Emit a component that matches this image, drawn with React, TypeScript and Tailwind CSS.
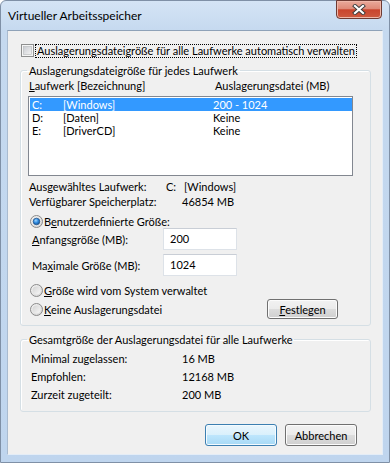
import React from 'react'

const drives = [
  { letter: 'C:', name: '[Windows]', size: '200 - 1024', selected: true },
  { letter: 'D:', name: '[Daten]', size: 'Keine', selected: false },
  { letter: 'E:', name: '[DriverCD]', size: 'Keine', selected: false },
]

const Radio: React.FC<{ checked?: boolean }> = ({ checked }) => (
  <svg width="13" height="13" viewBox="0 0 13 13" className="shrink-0">
    <defs>
      <linearGradient id="radioRing" x1="0" y1="0" x2="1" y2="1">
        <stop offset="0" stopColor="#f6f6f6" />
        <stop offset="1" stopColor="#d2d2d2" />
      </linearGradient>
      <linearGradient id="radioInner" x1="0" y1="0" x2="1" y2="1">
        <stop offset="0" stopColor="#d3d3d3" />
        <stop offset="1" stopColor="#f7f7f7" />
      </linearGradient>
      <radialGradient id="radioDot" cx="0.4" cy="0.35" r="0.7">
        <stop offset="0" stopColor="#9fd6ff" />
        <stop offset="0.5" stopColor="#2e8ae0" />
        <stop offset="1" stopColor="#174f8c" />
      </radialGradient>
    </defs>
    <circle cx="6.5" cy="6.5" r="6" fill="url(#radioRing)" stroke="#8a8a8a" strokeWidth="1" />
    <circle cx="6.5" cy="6.5" r="4" fill="url(#radioInner)" />
    {checked && <circle cx="6.5" cy="6.5" r="3.3" fill="url(#radioDot)" stroke="#1c4f86" strokeWidth="0.7" />}
  </svg>
)

const Checkbox = () => (
  <svg width="13" height="13" viewBox="0 0 13 13" className="shrink-0">
    <defs>
      <linearGradient id="cbInner" x1="0" y1="0" x2="1" y2="1">
        <stop offset="0" stopColor="#c9ccd1" />
        <stop offset="1" stopColor="#f4f4f4" />
      </linearGradient>
    </defs>
    <rect x="0.5" y="0.5" width="12" height="12" fill="#f5f5f5" stroke="#8e8f8f" />
    <rect x="2.5" y="2.5" width="8" height="8" fill="url(#cbInner)" stroke="#b5b7ba" strokeWidth="0.6" />
  </svg>
)

const WinButton: React.FC<{ children: React.ReactNode; primary?: boolean; className?: string }> = ({ children, primary, className }) => (
  <div
    className={
      'flex items-center justify-center rounded-[3px] border text-black ' +
      (primary
        ? 'border-[#3c7fb1] bg-[linear-gradient(#eaf6fd_0%,#d9f0fc_50%,#bee6fd_50%,#a7d9f5_100%)] shadow-[inset_0_0_0_1px_#f4fbff] '
        : 'border-[#707070] bg-[linear-gradient(#f2f2f2_0%,#ebebeb_50%,#dddddd_50%,#cfcfcf_100%)] shadow-[inset_0_0_0_1px_#fcfcfc] ') +
      (className ?? '')
    }
  >
    {children}
  </div>
)

export default function App() {
  return (
    <div className="w-[390px] font-['Lato',sans-serif] text-[11px] leading-[15px] text-black">
      <div className="rounded-t-[6px] border border-[#7f90a6] bg-[linear-gradient(#d4e4f5_0px,#c5d9ef_30px,#bfd5ee_100%)] px-[6px] pb-[7px]">
        {/* title bar */}
        <div className="flex h-[29px] items-start justify-between">
          <span className="pl-[1px] pt-[7px] text-[12px]">Virtueller Arbeitsspeicher</span>
          <div className="mr-[1px] mt-[-1px] flex h-[19px] w-[46px] items-center justify-center rounded-b-[4px] border border-[#6e3a32] bg-[linear-gradient(#eaaa9b_0%,#df8a78_45%,#c9452d_52%,#cd5a40_100%)] shadow-[inset_0_0_0_1px_#efb7a8]">
            <svg width="14" height="11" viewBox="0 0 14 11">
              <path d="M3 2 L11 9 M11 2 L3 9" stroke="#3b3b3b" strokeWidth="4" strokeLinecap="square" />
              <path d="M3 2 L11 9 M11 2 L3 9" stroke="#ffffff" strokeWidth="2.2" strokeLinecap="square" />
            </svg>
          </div>
        </div>

        {/* client area */}
        <div className="border border-t-[#8fa2b8] border-l-[#a9bbd0] border-r-[#e4edf7] border-b-[#e4edf7] bg-[#f0f0f0] px-[12px] pb-[8px] pt-[12px]">
          <div className="flex h-[15px] items-center">
            <div className="ml-[1px]">
              <Checkbox />
            </div>
            <span className="ml-[1px] whitespace-nowrap border border-dotted border-black px-[1px] leading-[12px]">
              Auslagerungsdateigröße für alle Laufwerke automatisch verwalten
            </span>
          </div>

          <fieldset className="mt-[5px] w-[351px] rounded-[3px] border border-[#d5dfe5] pb-[6px] pl-[7px] shadow-[inset_1px_1px_0_#ffffff]">
            <legend className="ml-[-1px] px-[2px]">Auslagerungsdateigröße für jedes Laufwerk</legend>
            <div className="flex">
              <span className="ml-[1px] w-[186px]">
                <u>L</u>aufwerk [Bezeichnung]
              </span>
              <span>Auslagerungsdatei (MB)</span>
            </div>
            <div className="mt-[3px] h-[80px] w-[325px] border border-[#828790] bg-white pl-[1px] pt-[1px]">
              {drives.map((d) => (
                <div
                  key={d.letter}
                  className={
                    'flex h-[13px] items-center pl-[2px] leading-[13px] ' +
                    (d.selected ? 'bg-[#3399ff] text-white' : '')
                  }
                >
                  <span className="w-[31px]">{d.letter}</span>
                  <span className="w-[150px]">{d.name}</span>
                  <span>{d.size}</span>
                </div>
              ))}
            </div>

            <div className="mt-[3px] flex pl-[1px]">
              <span className="w-[137px]">Ausgewähltes Laufwerk:</span>
              <span className="w-[18px]">C:</span>
              <span>[Windows]</span>
            </div>
            <div className="flex pl-[1px]">
              <span className="w-[153px]">Verfügbarer Speicherplatz:</span>
              <span>46854 MB</span>
            </div>

            <div className="mt-[6px] flex h-[13px] items-center pl-[2px]">
              <Radio checked />
              <span className="ml-[1px]">
                B<u>e</u>nutzerdefinierte Größe:
              </span>
            </div>
            <div className="flex h-[22px] items-center pl-[4px]">
              <span className="w-[131px]">
                <u>A</u>nfangsgröße (MB):
              </span>
              <div className="flex h-[22px] w-[74px] items-center border border-[#dde2e8] border-t-[#c9ced6] bg-white pl-[6px] pb-[2px]">
                200
              </div>
            </div>
            <div className="mt-[4px] flex h-[22px] items-center pl-[4px]">
              <span className="w-[131px]">
                Ma<u>x</u>imale Größe (MB):
              </span>
              <div className="flex h-[22px] w-[74px] items-center border border-[#dde2e8] border-t-[#c9ced6] bg-white pl-[6px] pb-[2px]">
                1024
              </div>
            </div>

            <div className="mt-[8px] flex h-[13px] items-center pl-[2px]">
              <Radio />
              <span className="ml-[1px]">
                <u>G</u>röße wird vom System verwaltet
              </span>
            </div>
            <div className="mt-[2px] flex h-[20px] items-center">
              <div className="flex w-[239px] items-center pl-[2px] pt-[1px]">
                <Radio />
                <span className="ml-[1px]">
                  <u>K</u>eine Auslagerungsdatei
                </span>
              </div>
              <WinButton className="h-[20px] w-[71px]">
                <span>
                  <u>F</u>estlegen
                </span>
              </WinButton>
            </div>
          </fieldset>

          <fieldset className="mt-[6px] w-[351px] rounded-[3px] border border-[#d5dfe5] pb-[7px] pl-[7px] shadow-[inset_1px_1px_0_#ffffff]">
            <legend className="ml-[-1px] px-[2px]">Gesamtgröße der Auslagerungsdatei für alle Laufwerke</legend>
            <div className="mt-[3px] flex flex-col pl-[3px] leading-[18px]">
              <div className="flex">
                <span className="w-[151px]">Minimal zugelassen:</span>
                <span>16 MB</span>
              </div>
              <div className="flex">
                <span className="w-[151px]">Empfohlen:</span>
                <span>12168 MB</span>
              </div>
              <div className="flex">
                <span className="w-[151px]">Zurzeit zugeteilt:</span>
                <span>200 MB</span>
              </div>
            </div>
          </fieldset>

          <div className="mt-[12px] flex justify-end gap-[8px] pr-[13px]">
            <WinButton primary className="h-[22px] w-[72px]">
              OK
            </WinButton>
            <WinButton className="h-[22px] w-[72px]">Abbrechen</WinButton>
          </div>
        </div>
      </div>
    </div>
  )
}
